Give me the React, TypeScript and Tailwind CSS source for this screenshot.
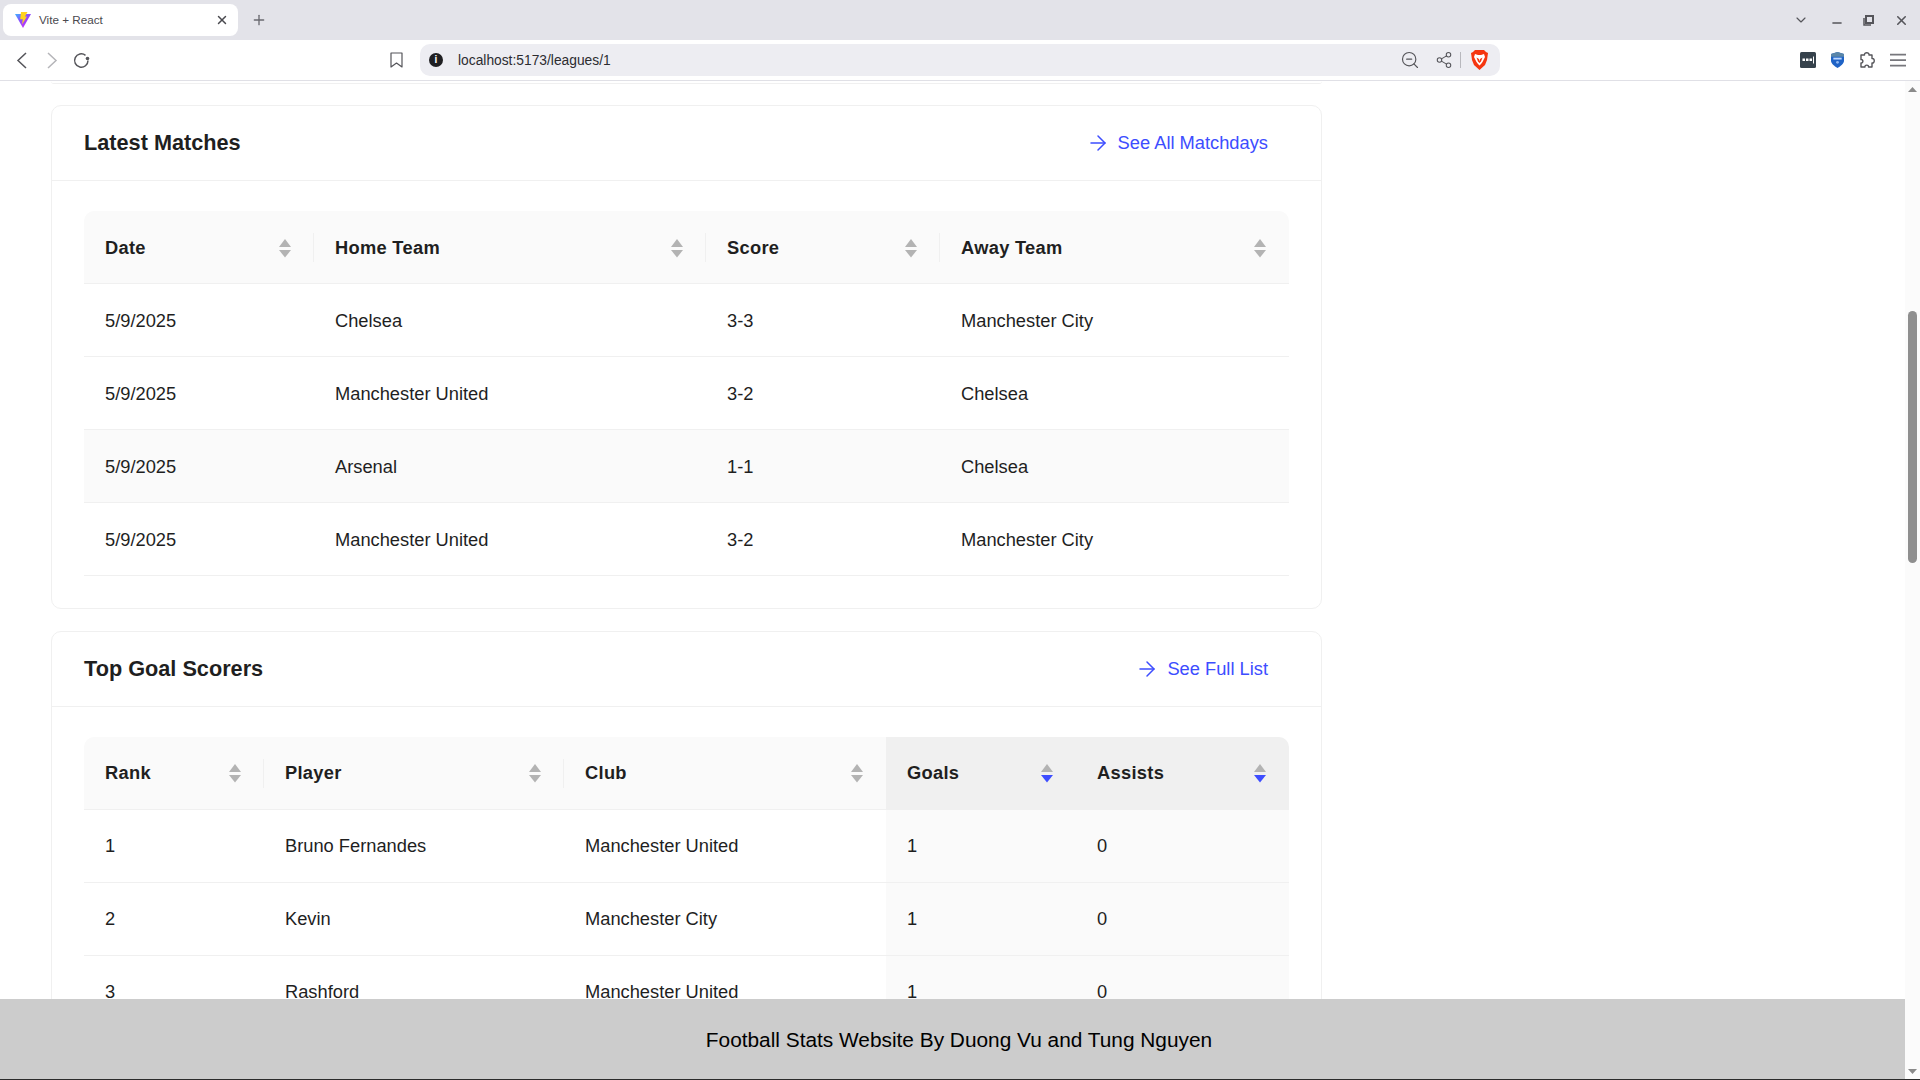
import { ArrowRight, ChevronDown, Minus, Plus, Share2, X, ZoomOut } from 'lucide-react';

type Column = { title: string; width: number; sorted?: boolean };

const matchColumns: Column[] = [
  { title: 'Date', width: 230 },
  { title: 'Home Team', width: 392 },
  { title: 'Score', width: 234 },
  { title: 'Away Team', width: 349 },
];

const matchRows = [
  ['5/9/2025', 'Chelsea', '3-3', 'Manchester City'],
  ['5/9/2025', 'Manchester United', '3-2', 'Chelsea'],
  ['5/9/2025', 'Arsenal', '1-1', 'Chelsea'],
  ['5/9/2025', 'Manchester United', '3-2', 'Manchester City'],
];

const scorerColumns: Column[] = [
  { title: 'Rank', width: 180 },
  { title: 'Player', width: 300 },
  { title: 'Club', width: 322 },
  { title: 'Goals', width: 190, sorted: true },
  { title: 'Assists', width: 213, sorted: true },
];

const scorerRows = [
  ['1', 'Bruno Fernandes', 'Manchester United', '1', '0'],
  ['2', 'Kevin', 'Manchester City', '1', '0'],
  ['3', 'Rashford', 'Manchester United', '1', '0'],
];

function SortIcon({ active }: { active?: boolean }) {
  return (
    <svg width="12" height="19" viewBox="0 0 12 19" className="shrink-0">
      <path d="M6 0 L12 8 L0 8 Z" fill="#b3b3b3" />
      <path d="M0 11 L12 11 L6 18.5 Z" fill={active ? '#3d4dff' : '#b3b3b3'} />
    </svg>
  );
}

function DataTable({
  columns,
  rows,
  hoverRow,
  cellPad = '',
}: {
  columns: Column[];
  rows: string[][];
  hoverRow?: number;
  cellPad?: string;
}) {
  return (
    <table className="w-[1205px] table-fixed border-separate border-spacing-0 text-[18.3px] text-[#1f1f1f]">
      <colgroup>
        {columns.map((c) => (
          <col key={c.title} style={{ width: c.width }} />
        ))}
      </colgroup>
      <thead>
        <tr>
          {columns.map((c, i) => (
            <th
              key={c.title}
              className={`relative h-[73px] border-b border-[#f0f0f0] pl-[21px] pr-[23px] text-left font-bold tracking-[0.3px] ${cellPad} ${
                c.sorted ? 'bg-[#f0f0f0]' : 'bg-[#fafafa]'
              } ${i === 0 ? 'rounded-tl-[10px]' : ''} ${i === columns.length - 1 ? 'rounded-tr-[10px]' : ''}`}
            >
              <div className="flex items-center justify-between">
                <span>{c.title}</span>
                <SortIcon active={c.sorted} />
              </div>
              {i < columns.length - 1 && !c.sorted && !columns[i + 1].sorted && (
                <span className="absolute right-0 top-[22px] h-[29px] w-px bg-[#f0f0f0]" />
              )}
            </th>
          ))}
        </tr>
      </thead>
      <tbody>
        {rows.map((row, r) => (
          <tr key={r}>
            {row.map((cell, i) => (
              <td
                key={i}
                className={`h-[73px] border-b border-[#f0f0f0] pl-[21px] ${cellPad} ${
                  r === hoverRow || columns[i].sorted ? 'bg-[#fafafa]' : ''
                }`}
              >
                {cell}
              </td>
            ))}
          </tr>
        ))}
      </tbody>
    </table>
  );
}

function Card({ title, link, children }: { title: string; link: string; children: React.ReactNode }) {
  return (
    <section className="w-[1271px] rounded-[10px] border border-[#f0f0f0] bg-white">
      <div className="flex h-[75px] items-center justify-between border-b border-[#f0f0f0] pl-8 pr-[53px]">
        <h2 className="text-[21.7px] font-bold text-[#1f1f1f]">{title}</h2>
        <a className="flex items-center gap-2 text-[18.3px] text-[#3d4dff]">
          <ArrowRight size={24} strokeWidth={1.5} />
          {link}
        </a>
      </div>
      <div className="px-8 pb-8 pt-[30px]">{children}</div>
    </section>
  );
}

function ViteLogo() {
  return (
    <svg width="16" height="16" viewBox="0 0 16 16" className="shrink-0">
      <defs>
        <linearGradient id="viteBody" x1="0" y1="0" x2="0.8" y2="1">
          <stop offset="0" stopColor="#3fb4ff" />
          <stop offset="0.45" stopColor="#8a4dff" />
          <stop offset="1" stopColor="#d02bf5" />
        </linearGradient>
      </defs>
      <path d="M0 2 L16 2 L8 16 Z" fill="url(#viteBody)" />
      <path d="M6 0 L12.5 0 L10 4.5 L12 4.5 L7 12.5 L7.8 7.2 L5.2 7.2 Z" fill="#ffd21f" />
    </svg>
  );
}

function BraveLogo() {
  return (
    <svg width="17" height="20" viewBox="0 0 17 20">
      <path d="M4 0 L13 0 L15 2 L17 3 L16 10 L14 15 L8.5 20 L3 15 L1 10 L0 3 L2 2 Z" fill="#f5350f" />
      <path d="M4 4 L7 5 L10 5 L13 4 L14 7 L11.5 12 L10 14 L8.5 15.5 L7 14 L5.5 12 L3 7 Z" fill="#ffffff" />
      <path d="M5.5 7.5 L8 9 L8.5 11.5 L9 9 L11.5 7.5 L10 11.5 L8.5 13 L7 11.5 Z" fill="#f5350f" />
    </svg>
  );
}

function PasswordIcon() {
  return (
    <svg width="16" height="16" viewBox="0 0 16 16" className="shrink-0">
      <rect width="16" height="16" rx="1.5" fill="#36424c" />
      <rect x="2.5" y="6.5" width="2.5" height="2.5" fill="#fff" />
      <rect x="6" y="6.5" width="2.5" height="2.5" fill="#fff" />
      <rect x="9.5" y="6.5" width="2.5" height="2.5" fill="#fff" />
      <rect x="13" y="4.5" width="1" height="7" fill="#fff" />
    </svg>
  );
}

function ShieldIcon() {
  return (
    <svg width="13" height="16" viewBox="0 0 14 17" className="shrink-0">
      <path d="M7 0 L14 2 L14 9 C14 12.5 10.5 15 7 17 C3.5 15 0 12.5 0 9 L0 2 Z" fill="#1f63c6" />
      <path d="M0 2 L7 0 L14 2 L14 5 L0 5 Z" fill="#5b86a8" />
      <rect x="2.5" y="6" width="9" height="2" fill="#bcd7ff" />
      <circle cx="7" cy="11" r="1.5" fill="#8fb6f0" />
    </svg>
  );
}

function ChromeBar() {
  return (
    <header className="shrink-0 text-[#55555a]">
      <div className="flex h-10 items-center bg-[#e3e3e9]">
        <div className="ml-[3px] flex h-8 w-[235px] items-center rounded-lg bg-white pl-3 pr-[9px]">
          <ViteLogo />
          <span className="ml-2 flex-1 text-[11.7px] text-[#4a4a4f]">Vite + React</span>
          <X size={14} strokeWidth={2.5} className="text-[#4a4a4f]" />
        </div>
        <Plus size={16} strokeWidth={2} className="ml-[13px] text-[#6a6a70]" />
        <div className="ml-auto flex items-center pr-[11px]">
          <ChevronDown size={16} strokeWidth={1.75} />
          <Minus size={14} strokeWidth={2.5} className="ml-[21px] translate-y-[3px]" />
          <svg width="11" height="11" viewBox="0 0 11 11" className="ml-[19px]">
            <path d="M3 1 H10 V8 H3 Z" fill="none" stroke="#55555a" strokeWidth="2" />
            <path d="M1 3 V10 H8" fill="none" stroke="#55555a" strokeWidth="1.5" />
          </svg>
          <X size={15} strokeWidth={2.5} className="ml-5" />
        </div>
      </div>
      <div className="flex h-[41px] items-center border-b border-[#e0e0e6] bg-white">
        <svg width="12" height="17" viewBox="0 0 12 17" className="ml-4 shrink-0">
          <path d="M10 1 L2 8.5 L10 16" fill="none" stroke="#55555a" strokeWidth="1.5" />
        </svg>
        <svg width="12" height="17" viewBox="0 0 12 17" className="ml-[18px] shrink-0">
          <path d="M2 1 L10 8.5 L2 16" fill="none" stroke="#b5b5b9" strokeWidth="1.5" />
        </svg>
        <svg width="17" height="17" viewBox="0 0 17 17" className="ml-[15px] shrink-0">
          <path d="M15 8.5 A6.7 6.7 0 1 1 12.5 3.3" fill="none" stroke="#55555a" strokeWidth="1.5" />
          <circle cx="14.5" cy="6.5" r="1.8" fill="#55555a" />
        </svg>
        <svg width="13" height="16" viewBox="0 0 13 16" className="ml-[300px] shrink-0">
          <path d="M1 1 H12 V15 L6.5 11 L1 15 Z" fill="none" stroke="#55555a" strokeWidth="1.2" strokeLinejoin="round" />
        </svg>
        <div className="ml-[17px] flex h-8 w-[1080px] items-center rounded-[10px] bg-[#ededf2] pl-[9px] pr-[12.5px]">
          <span className="flex h-[14px] w-[14px] items-center justify-center rounded-full bg-[#1f1f22] text-[10px] font-bold leading-none text-white">
            i
          </span>
          <span className="ml-[15px] flex-1 pt-[2px] text-[13.8px] text-[#2c2c30]">localhost:5173/leagues/1</span>
          <ZoomOut size={20} strokeWidth={1.4} />
          <Share2 size={18} strokeWidth={1.4} className="ml-[15px]" />
          <span className="ml-[7px] h-4 w-px bg-[#b8b8bd]" />
          <span className="ml-[10px] flex">
            <BraveLogo />
          </span>
        </div>
        <div className="ml-auto flex items-center pr-[14px]">
          <PasswordIcon />
          <span className="ml-[15px] flex">
            <ShieldIcon />
          </span>
          <svg width="18" height="18" viewBox="0 0 18 18" className="ml-[14px] shrink-0">
            <path
              d="M3 4 H6.5 C6 1 11.5 1 11 4 H14 V7.5 C17 7 17 12.5 14 12 V16 H10.5 C11 13.5 6.5 13.5 7 16 H3 V12 C5.5 12.5 5.5 8 3 8.5 Z"
              fill="none"
              stroke="#55555a"
              strokeWidth="1.4"
              strokeLinejoin="round"
            />
          </svg>
          <svg width="16" height="14" viewBox="0 0 16 14" className="ml-[14px] shrink-0">
            <path d="M0 1.5 H16 M0 7 H16 M0 12.5 H16" stroke="#77777c" strokeWidth="1.75" />
          </svg>
        </div>
      </div>
    </header>
  );
}

function Scrollbar() {
  return (
    <aside className="flex w-[15px] shrink-0 flex-col items-center bg-[#fbfbfb] pt-[6px]">
      <svg width="9" height="5" viewBox="0 0 9 5">
        <path d="M4.5 0 L9 5 L0 5 Z" fill="#8a8a8a" />
      </svg>
      <div className="mt-[219px] h-[252px] w-[9px] rounded-full bg-[#8f8f8f]" />
      <svg width="9" height="5" viewBox="0 0 9 5" className="mt-auto mb-[5px]">
        <path d="M0 0 L9 0 L4.5 5 Z" fill="#8a8a8a" />
      </svg>
    </aside>
  );
}

export default function App() {
  return (
    <div className="flex h-screen w-full flex-col overflow-hidden bg-white font-['Liberation_Sans',Arial,sans-serif]">
      <ChromeBar />
      <div className="flex min-h-0 flex-1">
        <div className="flex min-w-0 flex-1 flex-col">
          <main className="min-h-0 flex-1 overflow-hidden pl-[51px]">
            <div className="h-[3px] w-[1271px] rounded-b-[10px] border-b border-[#f0f0f0]" />
            <div className="mt-[21px] flex flex-col gap-[22px]">
              <Card title="Latest Matches" link="See All Matchdays">
                <DataTable columns={matchColumns} rows={matchRows} hoverRow={2} cellPad="pt-[2px]" />
              </Card>
              <Card title="Top Goal Scorers" link="See Full List">
                <DataTable columns={scorerColumns} rows={scorerRows} />
              </Card>
            </div>
          </main>
          <footer className="flex h-20 shrink-0 items-center justify-center bg-[#cccccc] pl-[13px] pt-[2px] text-[20.85px] text-black">
            Football Stats Website By Duong Vu and Tung Nguyen
          </footer>
        </div>
        <Scrollbar />
      </div>
      <div className="h-px shrink-0 bg-[#2b2b2b]" />
    </div>
  );
}
